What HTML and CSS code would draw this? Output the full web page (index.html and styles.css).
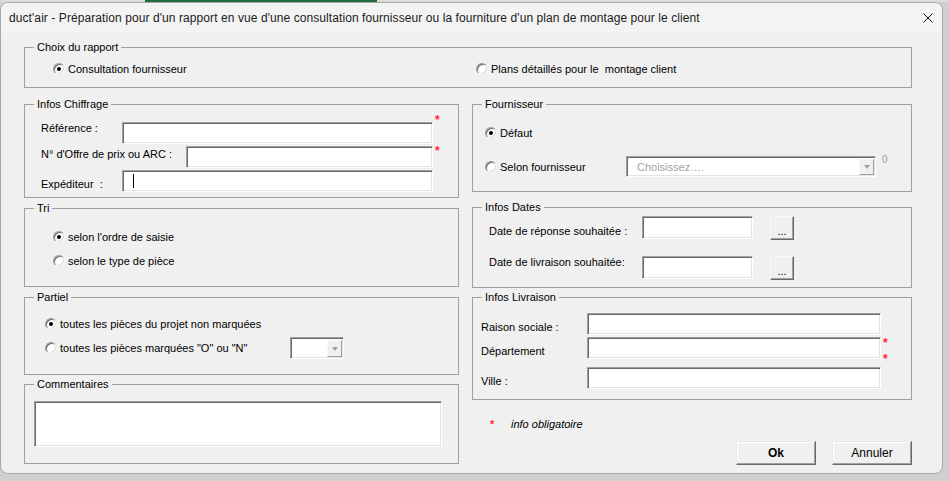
FILE: index.html
```html
<!DOCTYPE html>
<html lang="fr">
<head>
<meta charset="utf-8">
<title>duct'air</title>
<link rel="stylesheet" href="styles.css">
</head>
<body>
<div class="topstrip"><span class="green"></span></div>
<div class="window">
  <div class="titlebar">
    <span class="title">duct'air - Préparation pour d'un rapport en vue d'une consultation fournisseur ou la fourniture d'un plan de montage pour le client</span>
    <svg class="close" width="10" height="10" viewBox="0 0 10 10"><path d="M0.5 0.5 L9.5 9.5 M9.5 0.5 L0.5 9.5" stroke="#1b1b1b" stroke-width="1" fill="none"/></svg>
  </div>
  <div class="content">
    <div class="frame choix">
      <div class="frame-title">Choix du rapport</div>
      <div class="choix-row">
        <div class="opt choix-first"><span class="radio checked"></span><span class="opt-text">Consultation fournisseur</span></div>
        <div class="opt"><span class="radio"></span><span class="opt-text">Plans détaillés pour le&nbsp; montage client</span></div>
      </div>
    </div>

    <div class="columns">
      <div class="col">
        <div class="frame chiffrage">
          <div class="frame-title">Infos Chiffrage</div>
          <div class="field-row first">
            <span class="flabel w81">Référence :</span>
            <div class="field w311"></div>
            <span class="star star-a">*</span>
          </div>
          <div class="field-row">
            <span class="flabel w145 pt2">N° d'Offre de prix ou ARC :</span>
            <div class="field w247"></div>
            <span class="star star-b">*</span>
          </div>
          <div class="field-row">
            <span class="flabel w81 pt8">Expéditeur&nbsp; :</span>
            <div class="field w311"><span class="caret"></span></div>
          </div>
        </div>

        <div class="frame tri">
          <div class="frame-title">Tri</div>
          <div class="opt tri-1"><span class="radio checked"></span><span class="opt-text">selon l'ordre de saisie</span></div>
          <div class="opt tri-2"><span class="radio"></span><span class="opt-text">selon le type de pièce</span></div>
        </div>

        <div class="frame partiel">
          <div class="frame-title">Partiel</div>
          <div class="opt partiel-1"><span class="radio checked"></span><span class="opt-text">toutes les pièces du projet non marquées</span></div>
          <div class="partiel-2">
            <div class="opt partiel-opt"><span class="radio"></span><span class="opt-text">toutes les pièces marquées "O" ou "N"</span></div>
            <div class="combo small">
              <span class="combo-text"></span>
              <span class="combo-btn"><span class="tri-down"></span></span>
            </div>
          </div>
        </div>

        <div class="frame comments">
          <div class="frame-title">Commentaires</div>
          <div class="field textarea"></div>
        </div>
      </div>

      <div class="col">
        <div class="frame fourn">
          <div class="frame-title">Fournisseur</div>
          <div class="opt fourn-1"><span class="radio checked"></span><span class="opt-text">Défaut</span></div>
          <div class="fourn-2">
            <div class="opt fourn-opt"><span class="radio"></span><span class="opt-text">Selon fournisseur</span></div>
            <div class="combo big">
              <span class="combo-text placeholder">Choisissez….</span>
              <span class="combo-btn"><span class="tri-down"></span></span>
            </div>
            <span class="zero">0</span>
          </div>
        </div>

        <div class="frame dates">
          <div class="frame-title">Infos Dates</div>
          <div class="date-row first">
            <span class="flabel w153 pt9">Date de réponse souhaitée :</span>
            <div class="field date-field"></div>
            <button class="dots-btn">...</button>
          </div>
          <div class="date-row second">
            <span class="flabel w153">Date de livraison souhaitée:</span>
            <div class="field date-field"></div>
            <button class="dots-btn">...</button>
          </div>
        </div>

        <div class="frame livraison">
          <div class="frame-title">Infos Livraison</div>
          <div class="field-row first">
            <span class="flabel w106 pt8">Raison sociale :</span>
            <div class="field w294"></div>
          </div>
          <div class="field-row">
            <span class="flabel w106 pt8">Département</span>
            <div class="field w294"></div>
            <div class="stars"><span class="star">*</span><span class="star">*</span></div>
          </div>
          <div class="field-row">
            <span class="flabel w106 pt8">Ville :</span>
            <div class="field w294"></div>
          </div>
        </div>

        <div class="note"><span class="note-star">*</span><span class="note-text">info obligatoire</span></div>

        <div class="actions">
          <button class="btn bold">Ok</button>
          <button class="btn">Annuler</button>
        </div>
      </div>
    </div>
  </div>
</div>
</body>
</html>
```

FILE: styles.css
```css
* { box-sizing: border-box; }
html, body { margin: 0; padding: 0; }
body {
  width: 949px;
  height: 481px;
  overflow: hidden;
  background: #cfcfcf;
  font-family: "Liberation Sans", Arial, sans-serif;
  font-size: 11px;
  color: #000;
}
.topstrip { height: 2px; background: #dcdcdc; display: flex; }
.topstrip .green { margin-left: 145px; width: 232px; background: #1e6b3e; }

.window {
  width: 943px;
  height: 472px;
  background: #f0f0f0;
  border: 1px solid #a8a8a8;
  border-radius: 8px;
  overflow: hidden;
}
.titlebar {
  height: 30px;
  background: #f3f3f3;
  display: flex;
  align-items: center;
  padding: 0 9px 1px 8px;
}
.title { flex: 1; font-size: 12px; letter-spacing: 0.08px; color: #1b1b1b; white-space: nowrap; }
.close { flex: none; }

.content { padding: 14px 0 0 23px; }

.frame { border: 1px solid #a0a0a0; }
.frame-title {
  display: table;
  margin: -7px 0 0 9px;
  padding: 0 3px;
  background: #f0f0f0;
  line-height: 13px;
}

.choix { width: 888px; height: 41px; }
.choix-row { display: flex; margin-top: 8px; padding-left: 28px; }
.choix-first { width: 423px; }

.opt { display: flex; align-items: center; height: 14px; line-height: 13px; white-space: nowrap; }
.opt-text { margin-left: 3px; }
.radio {
  flex: none;
  position: relative;
  width: 12px;
  height: 12px;
  border-radius: 50%;
  background: #fff;
  border: 1px solid;
  border-color: #9a9a9a #f4f4f4 #f4f4f4 #9a9a9a;
  box-shadow: inset 1px 1px 0 #6a6a6a, inset -1px -1px 0 #dcdcdc;
}
.radio.checked::after {
  content: "";
  position: absolute;
  left: 3px;
  top: 3px;
  width: 4px;
  height: 4px;
  border-radius: 50%;
  background: #000;
}

.columns { display: grid; grid-template-columns: 435px 440px; column-gap: 13px; margin-top: 16px; }
.col { display: flex; flex-direction: column; }

.field {
  background: #fff;
  border: 1px solid;
  border-color: #a0a0a0 #fff #fff #a0a0a0;
  box-shadow: inset 1px 1px 0 #696969, inset -1px -1px 0 #e3e3e3;
  height: 22px;
}
.field-row { display: flex; align-items: flex-start; margin-top: 2px; padding-left: 16px; }
.field-row.first { margin-top: 11px; }
.flabel { flex: none; line-height: 13px; white-space: nowrap; }
.w81 { width: 81px; }
.w145 { width: 145px; }
.w153 { width: 153px; }
.w106 { width: 106px; }
.w311 { width: 311px; }
.w247 { width: 247px; }
.w294 { width: 294px; }
.pt2 { padding-top: 2px; }
.pt8 { padding-top: 8px; }
.pt9 { padding-top: 9px; }

.caret { display: block; width: 1px; height: 14px; background: #000; margin: 3px 0 0 10px; }

.star { color: #ff2a2a; font-size: 12px; font-weight: bold; line-height: 12px; margin-left: 2px; }
.star-a { margin-top: -8px; }
.star-b { margin-top: -1px; }
.stars { display: flex; flex-direction: column; gap: 4px; margin-left: 2px; }
.stars .star { margin-left: 0; }

.chiffrage { height: 94px; }

.tri { height: 79px; margin-top: 10px; }
.tri .opt { padding-left: 28px; }
.tri-1 { margin-top: 15px; }
.tri-2 { margin-top: 10px; }

.partiel { height: 78px; margin-top: 10px; }
.partiel-1 { margin-top: 13px; padding-left: 20px; }
.partiel-2 { display: flex; align-items: center; height: 22px; margin-top: 6px; padding-left: 20px; }
.partiel-opt { width: 245px; }

.combo {
  display: flex;
  background: #fff;
  border: 1px solid;
  border-color: #a0a0a0 #fff #fff #a0a0a0;
  box-shadow: inset 1px 1px 0 #696969, inset -1px -1px 0 #e3e3e3;
  padding: 2px 1px 1px 2px;
}
.combo.small { width: 54px; height: 22px; }
.combo.big { width: 250px; height: 21px; }
.combo-text { flex: 1; line-height: 16px; padding-left: 8px; white-space: nowrap; }
.placeholder { color: #a3a3a3; }
.combo-btn {
  flex: none;
  width: 15px;
  background: #f0f0f0;
  border: 1px solid;
  border-color: #f8f8f8 #a0a0a0 #a0a0a0 #f8f8f8;
  display: flex;
  align-items: center;
  justify-content: center;
}
.tri-down {
  width: 0;
  height: 0;
  border-left: 3.5px solid transparent;
  border-right: 3.5px solid transparent;
  border-top: 4px solid #a0a0a0;
}

.comments { height: 80px; margin-top: 9px; }
.textarea { width: 408px; height: 46px; margin: 10px 0 0 9px; }

.fourn { height: 88px; }
.fourn-1 { margin-top: 15px; padding-left: 12px; }
.fourn-2 { display: flex; align-items: flex-start; margin-top: 16px; padding-left: 12px; height: 21px; }
.fourn-opt { width: 141px; margin-top: 4px; }
.zero { color: #9a9a9a; font-size: 10px; line-height: 10px; margin: -1px 0 0 6px; }

.dates { height: 81px; margin-top: 15px; }
.date-row { display: flex; align-items: flex-start; padding-left: 16px; }
.date-row.first { margin-top: 2px; }
.date-row.second { margin-top: 16px; }
.date-field { width: 111px; height: 23px; }
.dots-btn {
  margin-left: 17px;
  width: 24px;
  height: 24px;
  padding: 6px 0 0;
  font: 11px "Liberation Sans", Arial, sans-serif;
  color: #000;
  background: #f0f0f0;
  border: 1px solid;
  border-color: #f8f8f8 #696969 #696969 #f8f8f8;
  box-shadow: inset -1px -1px 0 #a0a0a0;
}

.livraison { height: 103px; margin-top: 9px; }
.livraison .field-row { padding-left: 8px; }
.livraison .field-row.first { margin-top: 9px; }

.note { display: flex; align-items: flex-start; margin-top: 18px; padding-left: 18px; line-height: 13px; }
.note-star { width: 21px; color: #ff2a2a; font-weight: bold; }
.note-text { font-style: italic; }

.actions { display: flex; justify-content: flex-end; gap: 16px; margin-top: 10px; }
.btn {
  width: 80px;
  height: 24px;
  font: 12px "Liberation Sans", Arial, sans-serif;
  color: #000;
  background: #f0f0f0;
  border: 1px solid;
  border-color: #e8e8e8 #696969 #696969 #e8e8e8;
  box-shadow: inset -1px -1px 0 #a0a0a0, inset 1px 1px 0 #fff;
  padding: 0;
}
.btn.bold { font-weight: bold; }
```
